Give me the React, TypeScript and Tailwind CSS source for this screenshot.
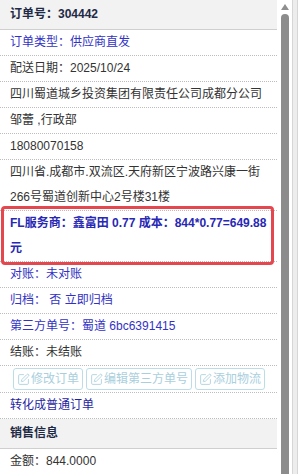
import { SquarePen } from "lucide-react";
import type { ReactNode } from "react";

const FONT = "font-['Liberation_Sans','Noto_Sans_CJK_SC',sans-serif]";

function Row(props: { children: ReactNode; className?: string }): React.JSX.Element {
  return (
    <div
      className={`border-b border-dotted border-[#bdbdbd] pl-[10px] pr-[6px] text-[12px] leading-[25px] ${props.className ?? "text-[#333]"}`}
    >
      {props.children}
    </div>
  );
}

function SectionHeader(props: { title: string }): React.JSX.Element {
  return (
    <div className="h-[30px] border-b border-[#cfcfcf] bg-[#f2f2f2] pl-[10px] text-[12px] font-bold leading-[29px] text-[#1e2a46]">
      {props.title}
    </div>
  );
}

function GhostButton(props: { label: string }): React.JSX.Element {
  return (
    <span className="flex h-[22px] items-center gap-[1px] rounded-[3px] border border-[#bcdde8] px-[3px] text-[12px] text-[#a9cfdd]">
      <SquarePen size={13} strokeWidth={1.6} className="text-[#a9cfdd]" />
      {props.label}
    </span>
  );
}

export default function App(): React.JSX.Element {
  return (
    <div className={`flex h-[474px] w-[305px] overflow-hidden bg-white ${FONT}`}>
      <div className="relative w-[277px] shrink-0">
        <SectionHeader title="订单号：304442" />
        <Row className="text-[#3232c6]">订单类型：供应商直发</Row>
        <Row>配送日期：2025/10/24</Row>
        <Row>四川蜀道城乡投资集团有限责任公司成都分公司</Row>
        <Row>邹蕾 ,行政部</Row>
        <Row>18080070158</Row>
        <Row>
          四川省.成都市.双流区.天府新区宁波路兴康一街
          <br />
          266号蜀道创新中心2号楼31楼
        </Row>
        <Row className="font-bold text-[#2828b4]">
          FL服务商：鑫富田 0.77 成本：844*0.77=649.88
          <br />元
        </Row>
        <Row className="text-[#3232c6]">对账：未对账</Row>
        <Row className="text-[#3232c6]">归档： 否 立即归档</Row>
        <Row className="text-[#3232c6]">第三方单号：蜀道 6bc6391415</Row>
        <Row>结账：未结账</Row>
        <div className="flex h-[27px] items-center gap-[3px] border-b border-dotted border-[#bdbdbd] pl-[13px]">
          <GhostButton label="修改订单" />
          <GhostButton label="编辑第三方单号" />
          <GhostButton label="添加物流" />
        </div>
        <Row className="text-[#1f1fa3]">转化成普通订单</Row>
        <SectionHeader title="销售信息" />
        <Row>金额：844.0000</Row>
        <div className="pointer-events-none absolute left-[1px] top-[206px] h-[59px] w-[273px] rounded-[4px] border-[3px] border-[#e5474e]" />
      </div>
      <div className="ml-[4px] flex w-[8px] shrink-0 flex-col items-center">
        <svg width="8" height="6" viewBox="0 0 8 6" className="mt-[4px]">
          <path d="M4 0 L8 6 L0 6 Z" fill="#8f8f8f" />
        </svg>
        <div className="mt-[4px] w-[8px] flex-1 rounded-t-full bg-[#8c8c8c]" />
      </div>
      <div className="ml-[3px] flex shrink-0">
        <div className="w-[6px] border-x border-[#d6d6d6] bg-[#ededed]" />
      </div>
    </div>
  );
}
